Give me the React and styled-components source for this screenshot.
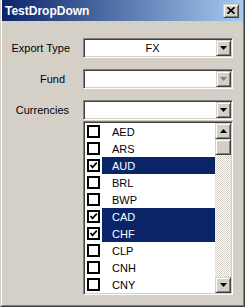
import React from 'react';
import styled, { createGlobalStyle } from 'styled-components';

const GlobalStyle = createGlobalStyle`
    html, body {
        margin: 0;
        padding: 0;
        background: #d4d0c8;
    }
    body {
        font-family: "Liberation Sans", Arial, sans-serif;
        font-size: 11px;
        color: #000;
    }
`;

const Window = styled.div`
    width: 245px;
    height: 307px;
    box-sizing: border-box;
    border-left: 1px solid #d4d0c8;
    border-right: 1px solid #404040;
    border-bottom: 1px solid #404040;
    background: #d4d0c8;
`;

const Frame = styled.div`
    height: 100%;
    box-sizing: border-box;
    border-left: 1px solid #ffffff;
    border-right: 1px solid #808080;
    border-bottom: 1px solid #808080;
    padding-bottom: 1px;
    display: flex;
    flex-direction: column;
`;

const TitleBar = styled.div`
    height: 21px;
    flex: none;
    display: flex;
    align-items: center;
    justify-content: space-between;
    padding: 0 4px 0 3px;
    background: linear-gradient(to right, #0a246a, #a6caf0);
`;

const Title = styled.span`
    color: #fff;
    font-weight: bold;
    font-size: 12px;
`;

const raised = `
    box-sizing: border-box;
    background: #d4d0c8;
    border: 1px solid;
    border-color: #d4d0c8 #404040 #404040 #d4d0c8;
    box-shadow: inset 1px 1px #ffffff, inset -1px -1px #808080;
    display: flex;
    align-items: center;
    justify-content: center;
`;

const sunken = `
    box-sizing: border-box;
    background: #fff;
    border: 1px solid;
    border-color: #808080 #ffffff #ffffff #808080;
    box-shadow: inset 1px 1px #404040, inset -1px -1px #d4d0c8;
    padding: 1px;
`;

const CloseButton = styled.div`
    ${raised}
    width: 16px;
    height: 14px;
`;

const Body = styled.div`
    flex: 1;
    display: flex;
    flex-direction: column;
    gap: 11px;
    padding: 17px 10px 0 0;
`;

const Field = styled.div`
    display: grid;
    grid-template-columns: 81px 150px;
    align-items: start;
`;

const Label = styled.div`
    height: 20px;
    display: flex;
    align-items: center;
    justify-content: flex-end;
    padding-right: ${p => p.$right}px;
`;

const Controls = styled.div`
    display: flex;
    flex-direction: column;
    gap: 1px;
`;

const Combo = styled.div`
    ${sunken}
    width: 150px;
    height: 20px;
    display: flex;
`;

const ComboValue = styled.div`
    flex: 1;
    display: flex;
    align-items: center;
    justify-content: center;
    padding-left: 4px;
`;

const DropButton = styled.div`
    ${raised}
    width: 15px;
    height: 16px;
`;

const List = styled.div`
    ${sunken}
    width: 150px;
    height: 174px;
    display: flex;
`;

const Rows = styled.div`
    flex: 1;
    display: flex;
    flex-direction: column;
`;

const Row = styled.div`
    height: 17px;
    display: flex;
    align-items: center;
`;

const CheckCell = styled.div`
    width: 17px;
    display: flex;
    align-items: center;
    padding-left: 2px;
    box-sizing: border-box;
`;

const Checkbox = styled.div`
    width: 13px;
    height: 13px;
    box-sizing: border-box;
    border: 2px solid #000;
    background: #fff;
    display: flex;
    align-items: center;
    justify-content: center;
`;

const ItemText = styled.div`
    flex: 1;
    height: 17px;
    display: flex;
    align-items: center;
    padding-left: 10px;
    background: ${p => (p.$selected ? '#0a246a' : 'transparent')};
    color: ${p => (p.$selected ? '#fff' : '#000')};
`;

const ScrollBar = styled.div`
    width: 16px;
    display: flex;
    flex-direction: column;
`;

const ScrollButton = styled.div`
    ${raised}
    width: 16px;
    height: 16px;
`;

const Track = styled.div`
    flex: 1;
    background: repeating-conic-gradient(#ffffff 0 25%, #d4d0c8 0 50%) 0 0 / 2px 2px;
`;

function Arrow({ up, color = '#000' }) {
    return (
        <svg width="7" height="4" viewBox="0 0 7 4">
            <polygon points={up ? '3.5,0 7,4 0,4' : '0,0 7,0 3.5,4'} fill={color} />
        </svg>
    );
}

function Tick() {
    return (
        <svg width="9" height="9" viewBox="0 0 9 9">
            <polyline points="1.5,4 3.5,6.3 7.8,1.6" fill="none" stroke="#000" strokeWidth="1.8" />
        </svg>
    );
}

const currencies = [
    { code: 'AED' },
    { code: 'ARS' },
    { code: 'AUD', on: true },
    { code: 'BRL' },
    { code: 'BWP' },
    { code: 'CAD', on: true },
    { code: 'CHF', on: true },
    { code: 'CLP' },
    { code: 'CNH' },
    { code: 'CNY' },
];

function App() {
    return (
        <>
            <GlobalStyle />
            <Window>
                <Frame>
                    <TitleBar>
                        <Title>TestDropDown</Title>
                        <CloseButton>
                            <svg width="8" height="7" viewBox="0 0 8 7">
                                <path d="M0.5 0.3 L7.5 6.7 M7.5 0.3 L0.5 6.7" stroke="#000" strokeWidth="1.7" />
                            </svg>
                        </CloseButton>
                    </TitleBar>
                    <Body>
                        <Field>
                            <Label $right={13}>Export Type</Label>
                            <Combo>
                                <ComboValue>FX</ComboValue>
                                <DropButton><Arrow /></DropButton>
                            </Combo>
                        </Field>
                        <Field>
                            <Label $right={18}>Fund</Label>
                            <Combo>
                                <ComboValue />
                                <DropButton><Arrow color="#808080" /></DropButton>
                            </Combo>
                        </Field>
                        <Field>
                            <Label $right={14}>Currencies</Label>
                            <Controls>
                                <Combo>
                                    <ComboValue />
                                    <DropButton><Arrow /></DropButton>
                                </Combo>
                                <List>
                                    <Rows>
                                        {currencies.map(c => (
                                            <Row key={c.code}>
                                                <CheckCell>
                                                    <Checkbox>{c.on && <Tick />}</Checkbox>
                                                </CheckCell>
                                                <ItemText $selected={c.on}>{c.code}</ItemText>
                                            </Row>
                                        ))}
                                    </Rows>
                                    <ScrollBar>
                                        <ScrollButton><Arrow up /></ScrollButton>
                                        <ScrollButton />
                                        <Track />
                                        <ScrollButton><Arrow /></ScrollButton>
                                    </ScrollBar>
                                </List>
                            </Controls>
                        </Field>
                    </Body>
                </Frame>
            </Window>
        </>
    );
}

export default App;
